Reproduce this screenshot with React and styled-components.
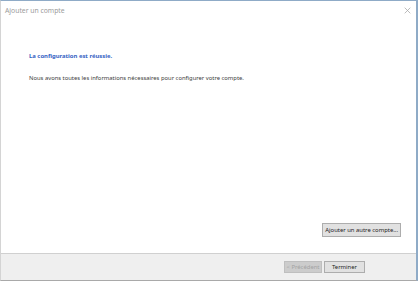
import React from "react";
import styled, { createGlobalStyle } from "styled-components";

const GlobalStyle = createGlobalStyle`
	html, body {
		margin: 0;
		padding: 0;
		background: #ffffff;
	}
	body {
		font-family: "Noto Sans", "Open Sans", sans-serif;
	}
`;

const Window = styled.div`
	width: 418px;
	height: 281px;
	box-sizing: border-box;
	display: flex;
	flex-direction: column;
	background: #ffffff;
	border-top: 1px solid #8fabc7;
	border-right: 2px solid #8fabc7;
	border-left: 1px solid #d4d4d4;
	border-bottom: 1px solid #a9a9a9;
`;

const TitleBar = styled.div`
	height: 21px;
	display: flex;
	align-items: center;
	justify-content: space-between;
	padding: 0 0 0 4px;
`;

const Title = styled.span`
	font-size: 6.8px;
	color: #9a9a9a;
	margin-top: -3px;
`;

const Close = styled.svg`
	width: 7px;
	height: 7px;
	margin-right: 5px;
	margin-top: -3px;
`;

const Content = styled.div`
	flex: 1;
	display: flex;
	flex-direction: column;
	padding: 30px 15px 16px 28px;
`;

const Heading = styled.div`
	font-size: 5.9px;
	font-weight: 700;
	color: #3462c4;
`;

const Body = styled.div`
	font-size: 5.85px;
	color: #3c3c3c;
	margin-top: 14px;
`;

const Spacer = styled.div`
	flex: 1;
`;

const Button = styled.button`
	font-family: inherit;
	font-size: 5.9px;
	height: ${(p) => (p.$tall ? 14 : 12)}px;
	padding: 0 ${(p) => p.$pad ?? 5}px;
	min-width: ${(p) => p.$min || 0}px;
	box-sizing: border-box;
	background: ${(p) => (p.disabled ? "#cccccc" : "#e1e1e1")};
	color: ${(p) => (p.disabled ? "#a3a3a3" : "#222222")};
	border: 1px solid ${(p) => (p.disabled ? "#bfbfbf" : "#adadad")};
	border-radius: 0;
	display: inline-flex;
	align-items: center;
	justify-content: center;
	white-space: nowrap;
`;

const Right = styled.div`
	display: flex;
	justify-content: flex-end;
`;

const Footer = styled.div`
	height: 27px;
	background: #efefef;
	border-top: 1px solid #d0d0d0;
	display: flex;
	justify-content: flex-end;
	align-items: center;
	gap: 2px;
	padding: 0 51px 0 0;
	box-sizing: border-box;
`;

export default function App() {
	return (
		<>
			<GlobalStyle />
			<Window>
				<TitleBar>
					<Title>Ajouter un compte</Title>
					<Close viewBox="0 0 10 10">
						<path d="M1 1 L9 9 M9 1 L1 9" stroke="#a8a8a8" strokeWidth="1.1" />
					</Close>
				</TitleBar>
				<Content>
					<Heading>La configuration est réussie.</Heading>
					<Body>Nous avons toutes les informations nécessaires pour configurer votre compte.</Body>
					<Spacer />
					<Right>
						<Button $tall $pad={2}>Ajouter un autre compte...</Button>
					</Right>
				</Content>
				<Footer>
					<Button disabled $pad={1} $min={38}>&lt; Précédent</Button>
					<Button $min={41}>Terminer</Button>
				</Footer>
			</Window>
		</>
	);
}
